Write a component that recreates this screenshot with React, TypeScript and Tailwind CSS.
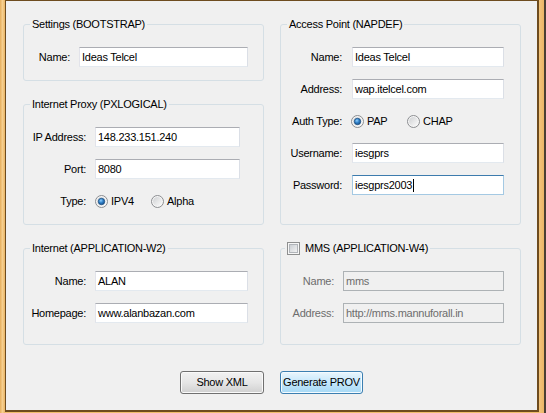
import React from "react";

function Radio({ checked, id }: { checked?: boolean; id: string }) {
  return (
    <svg width="13" height="13" viewBox="0 0 13 13" className="shrink-0">
      <defs>
        <linearGradient id={`rg-${id}`} x1="0" y1="0" x2="1" y2="1">
          <stop offset="0" stopColor="#cfd1d3" />
          <stop offset="1" stopColor="#fbfbfb" />
        </linearGradient>
        <radialGradient id={`rb-${id}`} cx="0.4" cy="0.35" r="0.7">
          <stop offset="0" stopColor="#8fd0ff" />
          <stop offset="0.5" stopColor="#2f7fc7" />
          <stop offset="1" stopColor="#174f8a" />
        </radialGradient>
      </defs>
      <circle cx="6.5" cy="6.5" r="6" fill="#f6f6f6" stroke="#8b8d90" strokeWidth="1" />
      <circle cx="6.5" cy="6.5" r="4.5" fill={`url(#rg-${id})`} />
      {checked && (
        <circle cx="6.5" cy="6.5" r="3.2" fill={`url(#rb-${id})`} stroke="#1d4f80" strokeWidth="0.8" />
      )}
    </svg>
  );
}

function CheckBox() {
  return (
    <svg width="13" height="13" viewBox="0 0 13 13" className="shrink-0">
      <defs>
        <linearGradient id="cbg" x1="0" y1="0" x2="1" y2="1">
          <stop offset="0" stopColor="#c9cdd2" />
          <stop offset="1" stopColor="#f4f4f4" />
        </linearGradient>
      </defs>
      <rect x="0.5" y="0.5" width="12" height="12" fill="#f6f6f6" stroke="#8e8f8f" />
      <rect x="2.5" y="2.5" width="8" height="8" fill="url(#cbg)" stroke="#b1b5ba" />
    </svg>
  );
}

function Group({
  title,
  className,
  children,
  legendClass,
}: {
  title: React.ReactNode;
  className?: string;
  children?: React.ReactNode;
  legendClass?: string;
}) {
  return (
    <div className={`border border-[#d5dfe5] rounded-[3px] ${className ?? ""}`}>
      <div
        className={`-mt-[7px] w-fit leading-[13px] h-[13px] bg-[#f0f0f0] flex items-center whitespace-nowrap ${
          legendClass ?? "ml-[6px] px-[2px]"
        }`}
      >
        {title}
      </div>
      {children}
    </div>
  );
}

function Field({
  label,
  labelW,
  gap,
  inputW,
  value,
  className,
  disabled,
  focused,
}: {
  label: string;
  labelW: string;
  gap: string;
  inputW: string;
  value: string;
  className?: string;
  disabled?: boolean;
  focused?: boolean;
}) {
  const border = disabled
    ? "border border-[#adb2b5] bg-[#f0f0f0] text-[#6d6d6d]"
    : focused
    ? "border border-[#a4c9e3] border-t-[#3d7bad] bg-white text-black"
    : "border border-[#e2e3ea] border-t-[#abadb3] border-r-[#dbdfe6] border-b-[#e3e9ef] bg-white text-black";
  return (
    <div className={`flex items-center h-[20px] ${className ?? ""}`}>
      <div className={`${labelW} text-right shrink-0 whitespace-nowrap ${disabled ? "text-[#6d6d6d]" : ""}`}>
        {label}
      </div>
      <div className={`${gap} ${inputW} h-[20px] shrink-0 ${border} pl-[2px] flex items-center whitespace-nowrap overflow-hidden`}>
        {value}
        {focused && <span className="inline-block w-px h-[13px] bg-black ml-px" />}
      </div>
    </div>
  );
}

export default function App() {
  return (
    <div className="w-[546px] h-[413px] flex bg-[#efbd6c] text-[11px] tracking-[-0.25px] text-black font-['Liberation_Sans',Arial,sans-serif] overflow-hidden">
      <div className="w-[5px] h-full bg-gradient-to-r from-[#e6ae5c] via-[#f6cf8f] to-[#eab565]" />
      <div className="w-[534px] h-[412px] shrink-0 border-l border-t border-r-2 border-b-2 border-[#6e4c1f] bg-[#f0f0f0] pl-[17px] pt-[23px]">
        <div className="grid grid-cols-[241px_241px] gap-x-[16px]">
          {/* Left column, row 1 */}
          <div className="flex flex-col gap-[23px] h-[201px]">
            <Group title="Settings (BOOTSTRAP)" className="h-[57px]">
              <Field className="mt-[16px]" label="Name:" labelW="w-[46px]" gap="ml-[9px]" inputW="w-[169px]" value="Ideas Telcel" />
            </Group>
            <Group title="Internet Proxy (PXLOGICAL)" className="h-[121px]">
              <Field className="mt-[16px]" label="IP Address:" labelW="w-[62px]" gap="ml-[9px]" inputW="w-[145px]" value="148.233.151.240" />
              <Field className="mt-[12px]" label="Port:" labelW="w-[62px]" gap="ml-[9px]" inputW="w-[145px]" value="8080" />
              <div className="mt-[16px] h-[13px] flex items-center">
                <div className="w-[62px] text-right">Type:</div>
                <div className="ml-[9px] w-[56px] flex items-center gap-[3px]">
                  <Radio checked id="ipv4" />
                  <span>IPV4</span>
                </div>
                <div className="flex items-center gap-[3px]">
                  <Radio id="alpha" />
                  <span>Alpha</span>
                </div>
              </div>
            </Group>
          </div>

          {/* Right column, row 1 */}
          <Group title="Access Point (NAPDEF)" className="h-[201px]">
            <Field className="mt-[16px]" label="Name:" labelW="w-[61px]" gap="ml-[10px]" inputW="w-[152px]" value="Ideas Telcel" />
            <Field className="mt-[12px]" label="Address:" labelW="w-[61px]" gap="ml-[10px]" inputW="w-[152px]" value="wap.itelcel.com" />
            <div className="mt-[16px] h-[13px] flex items-center">
              <div className="w-[61px] text-right">Auth Type:</div>
              <div className="ml-[9px] w-[56px] flex items-center gap-[3px]">
                <Radio checked id="pap" />
                <span>PAP</span>
              </div>
              <div className="flex items-center gap-[3px]">
                <Radio id="chap" />
                <span>CHAP</span>
              </div>
            </div>
            <Field className="mt-[15px]" label="Username:" labelW="w-[61px]" gap="ml-[10px]" inputW="w-[152px]" value="iesgprs" />
            <Field className="mt-[12px]" label="Password:" labelW="w-[61px]" gap="ml-[10px]" inputW="w-[152px]" value="iesgprs2003" focused />
          </Group>

          {/* Row 2 */}
          <Group title="Internet (APPLICATION-W2)" className="mt-[23px] h-[97px]">
            <Field className="mt-[16px]" label="Name:" labelW="w-[62px]" gap="ml-[9px]" inputW="w-[153px]" value="ALAN" />
            <Field className="mt-[12px]" label="Homepage:" labelW="w-[62px]" gap="ml-[9px]" inputW="w-[153px]" value="www.alanbazan.com" />
          </Group>
          <Group
            title={
              <>
                <CheckBox />
                <span className="ml-[5px]">MMS (APPLICATION-W4)</span>
              </>
            }
            legendClass="ml-[4px] px-[2px]"
            className="mt-[23px] h-[97px]"
          >
            <Field className="mt-[16px]" label="Name:" labelW="w-[53px]" gap="ml-[9px]" inputW="w-[161px]" value="mms" disabled />
            <Field className="mt-[12px]" label="Address:" labelW="w-[53px]" gap="ml-[9px]" inputW="w-[161px]" value="http://mms.mannuforall.in" disabled />
          </Group>

          {/* Buttons */}
          <div className="mt-[26px] flex justify-end">
            <button className="w-[84px] h-[23px] rounded-[3px] border border-[#707070] bg-gradient-to-b from-[#f2f2f2] via-[#e6e6e6] to-[#d0d0d0] shadow-[inset_0_0_0_1px_#fafafa] flex items-center justify-center">
              Show XML
            </button>
          </div>
          <div className="mt-[26px] flex justify-start">
            <button className="w-[83px] h-[23px] rounded-[3px] border border-[#3c7fb1] bg-gradient-to-b from-[#eaf6fd] via-[#c4e7fb] to-[#a7d9f5] shadow-[inset_0_0_0_1px_#f4fbff] flex items-center justify-center whitespace-nowrap">
              Generate PROV
            </button>
          </div>
        </div>
      </div>
      <div className="w-[5px] h-full bg-gradient-to-r from-[#f3c57c] to-[#eab565]" />
      <div className="w-[2px] h-full bg-[#4a3f33]" />
    </div>
  );
}
